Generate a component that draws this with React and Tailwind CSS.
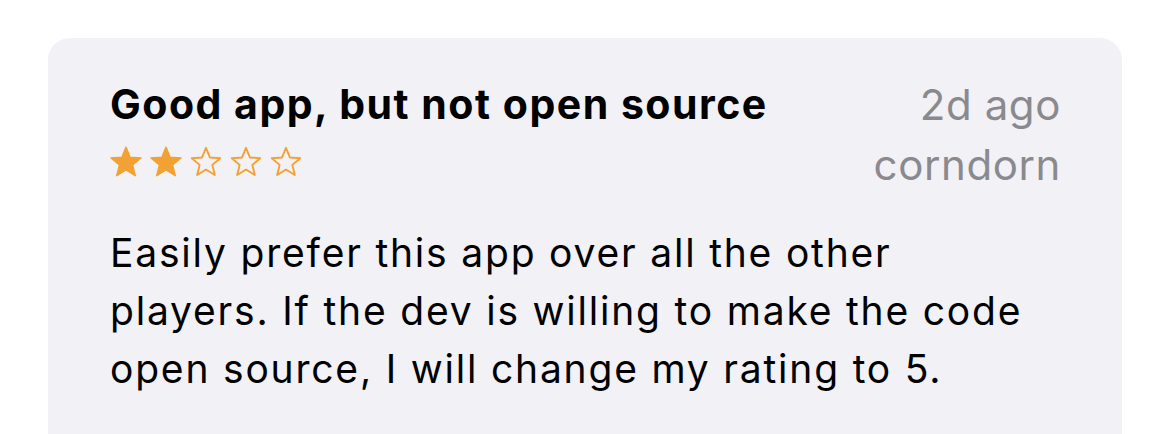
const STAR = 'M16 1.1 L20.11 11.24 L31.03 12.02 L22.66 19.06 L25.29 29.68 L16 23.9 L6.71 29.68 L9.34 19.06 L0.97 12.02 L11.89 11.24 Z';

function Stars({ rating }) {
  return (
    <div className="flex gap-[8px]">
      {[1, 2, 3, 4, 5].map((i) => {
        const filled = i <= rating;
        return (
          <svg key={i} width="32" height="31" viewBox="0 0 32 31" className="text-[#f2a135]">
            <path
              d={STAR}
              fill={filled ? 'currentColor' : 'none'}
              stroke="currentColor"
              strokeWidth={filled ? 1.4 : 2}
              strokeLinejoin="round"
              transform={filled ? undefined : 'translate(0.8 0.78) scale(0.95)'}
            />
          </svg>
        );
      })}
    </div>
  );
}

export default function App() {
  return (
    <div className="h-[434px] overflow-hidden bg-white pt-[38px] px-[48px] font-['Inter','Liberation_Sans',sans-serif]">
      <div className="bg-[#f1f1f6] rounded-[22px] w-[1074px] h-[440px] pl-[62px] pr-[61px] pt-[42px]">
        {/* Header */}
        <div className="flex justify-between">
          <div>
            <h1 className="text-[41px] leading-[48px] font-bold text-black tracking-[1.5px]">
              Good app, but not open source
            </h1>
            <div className="mt-[18px]">
              <Stars rating={2} />
            </div>
          </div>
          <div className="text-right text-[42px] leading-[60px] text-[#8a8a8e] tracking-[0.6px] -mt-[5px]">
            <div>2d ago</div>
            <div>corndorn</div>
          </div>
        </div>

        {/* Review body */}
        <p className="mt-[29px] text-[39px] leading-[58px] text-black tracking-[1.8px]">
          Easily prefer this app over all the other
          <br />
          players. If the dev is willing to make the code
          <br />
          open source, I will change my rating to 5.
        </p>
      </div>
    </div>
  );
}
